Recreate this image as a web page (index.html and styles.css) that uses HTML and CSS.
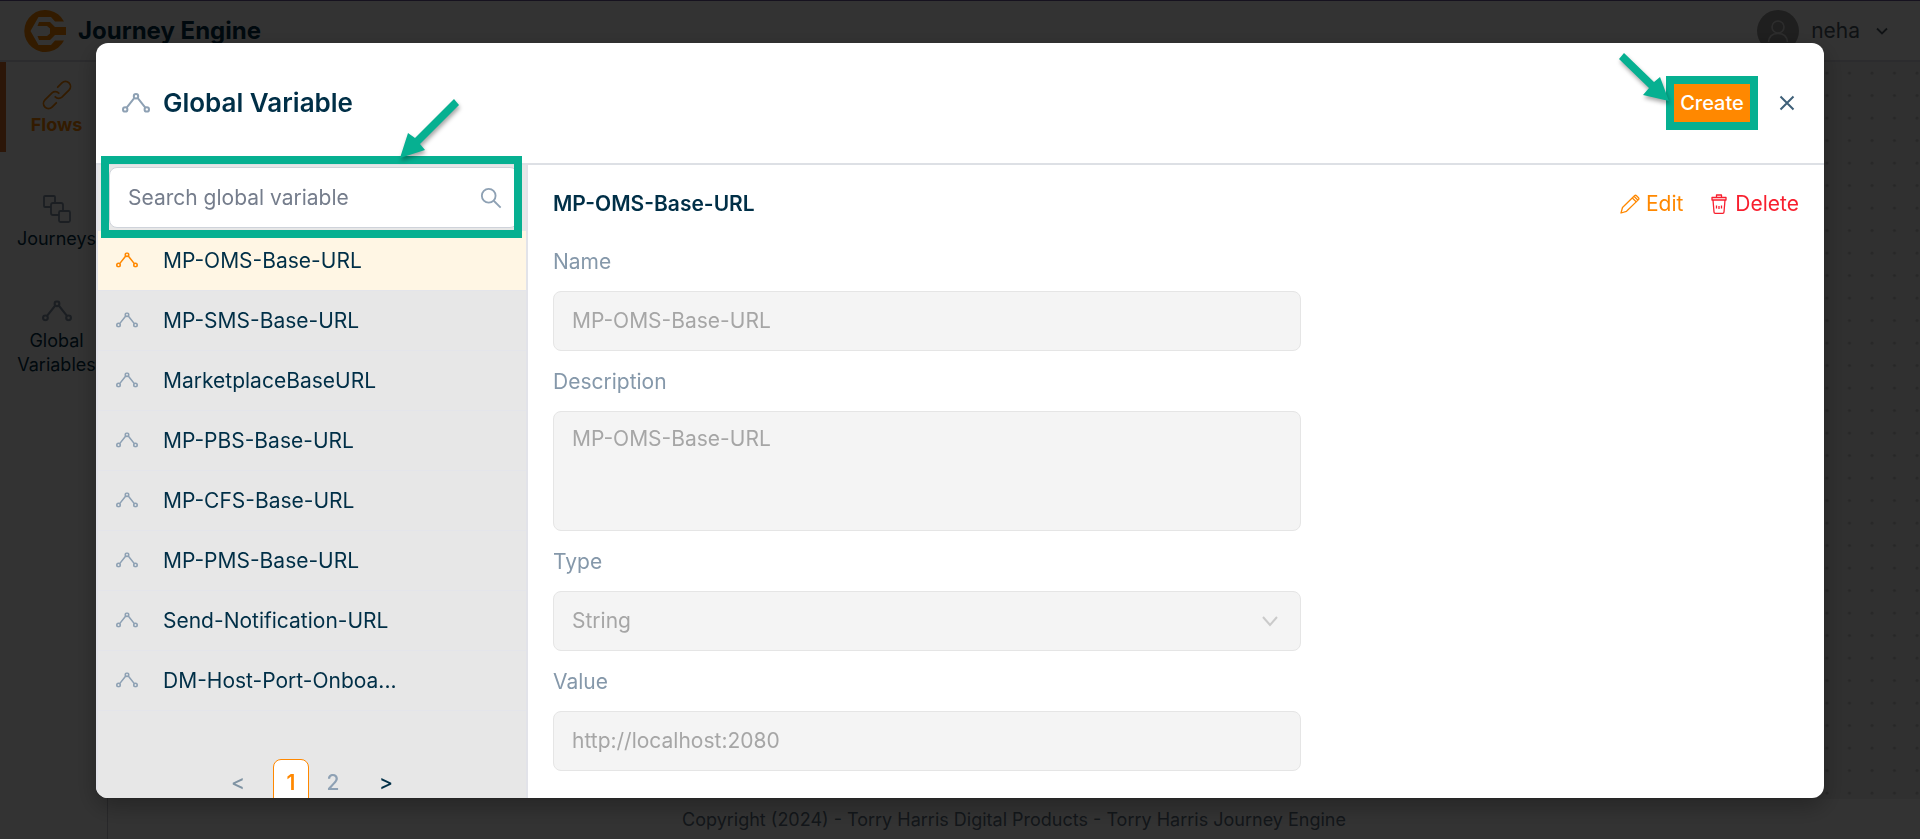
FILE: index.html
```html
<!DOCTYPE html>
<html lang="en">
<head>
<meta charset="utf-8">
<title>Journey Engine</title>
<link rel="stylesheet" href="styles.css">
</head>
<body>
<svg class="sprite" aria-hidden="true">
  <symbol id="nodes" viewBox="0 0 28 20">
    <g fill="none" stroke="currentColor" stroke-width="2">
      <circle cx="14" cy="3.2" r="2.2"/><circle cx="3.2" cy="16.4" r="2.2"/><circle cx="24.8" cy="16.4" r="2.2"/>
      <path d="M12.4 4.9 4.7 14.6M15.6 4.9 23.3 14.6"/>
    </g>
  </symbol>
</svg>

<div class="app">
  <header class="topbar">
    <div class="brand">
      <svg class="logo" viewBox="0 0 42 42" aria-hidden="true">
        <path fill="currentColor" d="M40 11.500A21 21 0 1 0 40 30.500L31 30.500 27 35H14.500L6.500 21 14.500 7H27L31 11.500Z"/>
        <path fill="currentColor" d="M42 17V25H31L26 30H15L13.500 26H23L26 23.500V18.500L23 16H13.500L15 12H26L31 17Z"/>
      </svg>
      <span class="brand-name">Journey Engine</span>
    </div>
    <button class="user" type="button">
      <span class="avatar"><svg viewBox="0 0 42 42" aria-hidden="true"><g fill="none" stroke="currentColor" stroke-width="1.600"><circle cx="21" cy="17" r="6"/><path d="M11.500 32C12 26 16 23.500 21 23.500S30 26 30.500 32"/></g></svg></span>
      <span>neha</span>
      <svg class="user-caret" viewBox="0 0 12 8" aria-hidden="true"><path d="M1 1.500 6 6.500 11 1.500" fill="none" stroke="currentColor" stroke-width="1.800"/></svg>
    </button>
  </header>
  <nav class="rail">
    <a class="rail-item active" href="#">
      <svg viewBox="0 0 30 30" aria-hidden="true"><g transform="rotate(-45 15 15)" fill="none" stroke="currentColor" stroke-width="1.800" stroke-linecap="round"><path d="M9 20H3A5 5 0 0 1 -2 15A5 5 0 0 1 3 10H13A5 5 0 0 1 17.500 15"/><path d="M21 10H27A5 5 0 0 1 32 15A5 5 0 0 1 27 20H17A5 5 0 0 1 12.500 15"/></g></svg>
      <span>Flows</span>
    </a>
    <a class="rail-item" href="#">
      <svg viewBox="0 0 30 30" aria-hidden="true"><g fill="none" stroke="currentColor" stroke-width="1.800"><path d="M9 13H3Q2 13 2 12V3Q2 2 3 2H12Q13 2 13 3V9"/><path d="M17 21H11Q9 21 9 19V11Q9 9 11 9H19Q21 9 21 11V17"/><rect x="17" y="17" width="11" height="11" rx="1.500"/></g></svg>
      <span>Journeys</span>
    </a>
    <a class="rail-item" href="#">
      <svg viewBox="0 0 28 20" aria-hidden="true"><use href="#nodes"/></svg>
      <span>Global Variables</span>
    </a>
  </nav>
  <main class="canvas">
    <svg class="dots" aria-hidden="true">
      <pattern id="dot" width="22.500" height="22.500" patternUnits="userSpaceOnUse"><circle cx="9" cy="11" r="1.500"/></pattern>
      <rect width="100%" height="100%" fill="url(#dot)"/>
    </svg>
  </main>
  <footer class="footer">Copyright (2024) - Torry Harris Digital Products - Torry Harris Journey Engine</footer>
</div>

<div class="backdrop">
  <section class="modal" role="dialog" aria-labelledby="modal-title">
    <header class="modal-head">
      <svg class="head-icon" viewBox="0 0 28 20" aria-hidden="true"><use href="#nodes"/></svg>
      <h1 id="modal-title">Global Variable</h1>
      <div class="create-wrap">
        <button class="create" type="button">Create</button>
        <svg class="arrow arrow-create" viewBox="0 0 60 60" aria-hidden="true"><path d="M12 6 42 35 48 30 57 54 31 48 37 41 7 12Z"/></svg>
      </div>
      <button class="close" type="button" aria-label="Close"><svg viewBox="0 0 16 16" aria-hidden="true"><path d="M1.500 1.500 14.500 14.500M14.500 1.500 1.500 14.500" stroke="currentColor" stroke-width="2"/></svg></button>
    </header>
    <div class="modal-body">
      <aside class="side">
        <div class="search">
          <input type="search" placeholder="Search global variable" aria-label="Search global variable">
          <svg class="search-icon" viewBox="0 0 24 24" aria-hidden="true"><g fill="none" stroke="currentColor" stroke-width="2"><circle cx="9.500" cy="9.500" r="7.500"/><path d="M15 15 22.500 22.500"/></g></svg>
          <span class="ring"></span>
          <svg class="arrow arrow-search" viewBox="0 0 70 70" aria-hidden="true"><path d="M60 5 21 44 14 39 6 64 31 56 26 50 65 11Z"/></svg>
        </div>
        <ul class="list">
          <li><button class="row selected" type="button"><svg viewBox="0 0 28 20" aria-hidden="true"><use href="#nodes"/></svg><span>MP-OMS-Base-URL</span></button></li>
          <li><button class="row" type="button"><svg viewBox="0 0 28 20" aria-hidden="true"><use href="#nodes"/></svg><span>MP-SMS-Base-URL</span></button></li>
          <li><button class="row" type="button"><svg viewBox="0 0 28 20" aria-hidden="true"><use href="#nodes"/></svg><span>MarketplaceBaseURL</span></button></li>
          <li><button class="row" type="button"><svg viewBox="0 0 28 20" aria-hidden="true"><use href="#nodes"/></svg><span>MP-PBS-Base-URL</span></button></li>
          <li><button class="row" type="button"><svg viewBox="0 0 28 20" aria-hidden="true"><use href="#nodes"/></svg><span>MP-CFS-Base-URL</span></button></li>
          <li><button class="row" type="button"><svg viewBox="0 0 28 20" aria-hidden="true"><use href="#nodes"/></svg><span>MP-PMS-Base-URL</span></button></li>
          <li><button class="row" type="button"><svg viewBox="0 0 28 20" aria-hidden="true"><use href="#nodes"/></svg><span>Send-Notification-URL</span></button></li>
          <li><button class="row" type="button"><svg viewBox="0 0 28 20" aria-hidden="true"><use href="#nodes"/></svg><span>DM-Host-Port-Onboa...</span></button></li>
        </ul>
        <div class="pager">
          <button class="step off" type="button" aria-label="Previous page">&lt;</button>
          <button class="page current" type="button">1</button>
          <button class="page" type="button">2</button>
          <button class="step" type="button" aria-label="Next page">&gt;</button>
        </div>
      </aside>
      <div class="detail">
        <div class="detail-head">
          <h2>MP-OMS-Base-URL</h2>
          <button class="action edit" type="button"><svg viewBox="0 0 20 20" aria-hidden="true"><g fill="none" stroke="currentColor" stroke-width="1.300" stroke-linejoin="round"><path d="M1 19 2.500 13.500 14.500 1.800Q15.500 .8 16.500 1.800L18.500 3.800Q19.300 4.700 18.500 5.600L6.500 17.300Z"/><path d="M12.300 4 16.400 8M14.200 2.500 18 6.200"/></g></svg>Edit</button>
          <button class="action delete" type="button"><svg viewBox="0 0 20 20" aria-hidden="true"><g fill="none" stroke="currentColor" stroke-width="1.300" stroke-linejoin="round"><path d="M3 3.500H17V6H3ZM7.500 3.500V1H12.500V3.500M4 6 5 18Q5 19.300 6.300 19.300H13.700Q15 19.300 15 18L16 6M7.500 11.500V14.500M10 12V15M12.500 11.500V14.500"/></g></svg>Delete</button>
        </div>
        <form class="fields">
          <label for="f-name">Name</label>
          <input id="f-name" type="text" value="MP-OMS-Base-URL" disabled>
          <label for="f-desc">Description</label>
          <textarea id="f-desc" disabled>MP-OMS-Base-URL</textarea>
          <label for="f-type">Type</label>
          <div class="select">
            <select id="f-type" disabled><option>String</option></select>
            <svg viewBox="0 0 16 12" aria-hidden="true"><path d="M1 2 8 10 15 2" fill="none" stroke="currentColor" stroke-width="2"/></svg>
          </div>
          <label for="f-value">Value</label>
          <input id="f-value" type="text" value="http://localhost:2080" disabled>
        </form>
      </div>
    </div>
  </section>
</div>
</body>
</html>
```
FILE: styles.css
```css
* { box-sizing: border-box; }

html, body { height: 100%; }

body {
  margin: 0;
  overflow: hidden;
  font-family: Inter, "Liberation Sans", sans-serif;
  font-size: 21px;
  color: #002f47;
}

button, input, select, textarea { font: inherit; color: inherit; }

button {
  margin: 0;
  padding: 0;
  border: 0;
  background: none;
}

.sprite { position: absolute; width: 0; height: 0; }

/* Application behind the dialog */
.app {
  display: grid;
  grid-template: 62px 1fr 40px / 108px 1fr;
  height: 100%;
}

.topbar {
  grid-column: 1 / -1;
  display: flex;
  align-items: center;
  justify-content: space-between;
  padding: 0 32px 0 24px;
  border-top: 1px solid #6f5a9c;
  border-bottom: 2px solid #dcdce4;
}

.brand { display: flex; align-items: center; gap: 12px; }
.logo { width: 42px; height: 42px; color: #ff8800; }
.brand-name { font-size: 24px; font-weight: 700; }

.user { display: flex; align-items: center; gap: 12px; color: #4d5a66; }
.avatar {
  width: 42px;
  height: 42px;
  border-radius: 50%;
  background: #999;
  color: #ddd;
}
.avatar svg { display: block; }
.user-caret { width: 12px; height: 8px; margin: 0 0 0 4px; }

.rail {
  grid-row: 2 / 4;
  display: flex;
  flex-direction: column;
  border-right: 1px solid #c8c8d0;
}
.rail-item {
  display: flex;
  flex-direction: column;
  align-items: center;
  gap: 3px;
  padding: 18px 0 15px;
  margin-bottom: 12px;
  border-left: 6px solid transparent;
  font-size: 18px;
  line-height: 24px;
  text-align: center;
  text-decoration: none;
  color: #002f47;
}
.rail-item svg { width: 30px; height: 30px; overflow: visible; color: #8598aa; }
.rail-item.active {
  margin-bottom: 24px;
  border-color: #d9702b;
  color: #ff8800;
  font-weight: 700;
}
.rail-item.active svg { color: #ff8800; }

.canvas { background: #f0f0f0; }
.dots { display: block; width: 100%; height: 100%; fill: #c4c4c4; }

.footer {
  display: flex;
  align-items: center;
  justify-content: center;
  font-size: 18px;
  color: #5e7080;
}

/* Dialog */
.backdrop {
  position: fixed;
  inset: 0;
  display: flex;
  align-items: center;
  justify-content: center;
  padding-top: 2px;
  background: rgba(0, 0, 0, .8);
}

.modal {
  display: flex;
  flex-direction: column;
  width: 90%;
  height: 90vh;
  overflow: hidden;
  border-radius: 12px;
  background: #fff;
  box-shadow: 0 8px 24px rgba(0, 0, 0, .3);
}

.modal-head {
  flex: none;
  display: flex;
  align-items: center;
  height: 122px;
  padding: 0 29px 0 26px;
  border-bottom: 2px solid #dde0e5;
}
.head-icon { width: 28px; height: 20px; color: #8ea1b4; }
.modal-head h1 {
  flex: 1;
  margin: 0 0 0 13px;
  font-size: 26px;
  font-weight: 600;
}
.create-wrap { position: relative; margin-right: 21px; }
.create {
  display: block;
  width: 92px;
  height: 54px;
  border: 8px solid #06b091;
  background: #ff8800;
  color: #fff;
  font-size: 20px;
  font-weight: 500;
}
.close { width: 16px; height: 16px; color: #3f6079; }
.close svg { display: block; }

.arrow {
  position: absolute;
  fill: #06b091;
  filter: drop-shadow(1px 3px 2px rgba(0, 0, 0, .35));
}
.arrow-create { width: 60px; height: 60px; right: 86px; top: -29px; }
.arrow-search { width: 70px; height: 70px; left: 296px; top: -71px; }

.modal-body { flex: 1; display: flex; min-height: 0; }

.side {
  flex: none;
  width: 25%;
  border: solid #e2e3e9;
  border-width: 0 2px;
  background: #e7e7e7;
}

.search { position: relative; padding: 2px 8px 3px 11px; }
.search input {
  display: block;
  width: 100%;
  height: 61px;
  padding: 0 18px;
  border: 1px solid #cfd3da;
  border-radius: 8px;
  background: #fff;
}
.search input::placeholder { color: #757d8c; opacity: 1; }
.search-icon {
  position: absolute;
  right: 24px;
  top: 22px;
  width: 22px;
  height: 22px;
  color: #8ea1b4;
}
.ring {
  position: absolute;
  inset: -9px 4px -7px 3px;
  border: 8px solid #06b091;
  pointer-events: none;
}

.list { margin: 0; padding: 0; list-style: none; }
.row {
  display: flex;
  align-items: center;
  gap: 25px;
  width: 100%;
  height: 60px;
  padding: 0 18px;
  border-bottom: 1px solid #e4e5ea;
}
.row svg { width: 22px; height: 16px; color: #8ea1b4; }
.row.selected { background: #fff6e4; }
.row.selected svg { color: #ff8800; }

.pager {
  display: flex;
  justify-content: center;
  align-items: center;
  margin-top: 48px;
  color: #8ea1b4;
}
.pager button { width: 36px; height: 48px; border-radius: 8px; font-weight: 500; }
.pager .page { margin: 0 3px; }
.pager .step { color: #002f47; margin: 0 14px; }
.pager .off { color: #7f93a3; }
.pager .current { border: 1px solid #ff8800; background: #fff; color: #ff8800; font-weight: 600; }

.detail { flex: 1; padding: 12px 25px; }
.detail-head { display: flex; align-items: center; height: 54px; gap: 26px; }
.detail-head h2 { flex: 1; margin: 0; font-size: 21px; font-weight: 600; }
.action { display: flex; align-items: center; gap: 6px; }
.action svg { width: 20px; height: 20px; }
.edit { color: #ff8800; }
.delete { color: #f81f2e; }

.fields { display: flex; flex-direction: column; width: 60%; }
.fields label { padding-top: 2px; line-height: 58px; color: #8598aa; }
.fields input, .fields select, .fields textarea {
  display: block;
  width: 100%;
  height: 60px;
  padding: 0 18px;
  border: 1px solid #e5e5e5;
  border-radius: 8px;
  background: #f4f4f4;
  color: #a6a6a6;
  opacity: 1;
  appearance: none;
  resize: none;
}
.fields textarea { height: 120px; padding: 14px 18px; }
.select { position: relative; }
.select svg {
  position: absolute;
  right: 23px;
  top: 24px;
  width: 16px;
  height: 12px;
  color: #cacaca;
}
```
